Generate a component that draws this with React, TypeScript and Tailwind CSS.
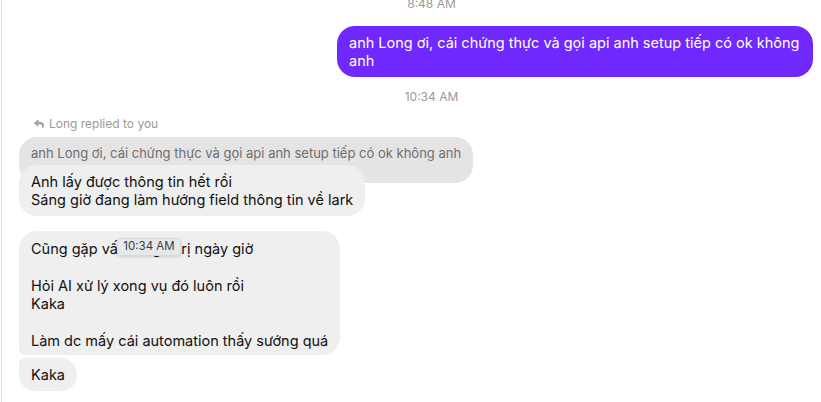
import { FaReply } from 'react-icons/fa';

const font = { fontFamily: 'Inter, "Noto Sans", sans-serif' };

function Stamp({ time, className }: { time: string; className: string }) {
  return (
    <div className={`flex justify-center pl-[31px] text-[12px] leading-[16px] text-[#9a9a9a] ${className}`}>
      {time}
    </div>
  );
}

export default function App() {
  return (
    <div style={font} className="h-[402px] w-[821px] overflow-hidden bg-white">
      <div className="ml-px flex h-full flex-col border-l border-[#dcdcdc] pl-[17px] pr-[8px]">
        {/* earlier timestamp, cut off at the top */}
        <Stamp time="8:48 AM" className="mt-[-4px]" />

        {/* outgoing */}
        <div className="mt-[14px] flex justify-end">
          <div className="w-[476px] rounded-[18px] bg-[#7028fd] px-[12px] pt-[7.5px] pb-[6.5px] text-[14.5px] leading-[18.5px] text-white">
            anh Long ơi, cái chứng thực và gọi api anh setup tiếp có ok không anh
          </div>
        </div>

        <Stamp time="10:34 AM" className="mt-[12px]" />

        {/* reply header */}
        <div className="mt-[11px] flex items-center gap-[5px] pl-[15px] text-[12px] leading-[16px] text-[#9a9a9a]">
          <FaReply size={10} className="text-[#a3a3a3]" />
          <span>Long replied to you</span>
        </div>

        {/* quoted message */}
        <div className="mt-[5px] flex flex-col items-start">
          <div className="rounded-[18px] bg-[#e4e4e4] px-[12px] pt-[8px] pb-[21px] text-[13px] leading-[17px] text-[#6e6e6e]">
            anh Long ơi, cái chứng thực và gọi api anh setup tiếp có ok không anh
          </div>
          <div className="mt-[-18px] rounded-[18px] bg-[#efefef] px-[12px] pt-[7.5px] pb-[6.5px] text-[14.5px] leading-[18.5px] text-[#111]">
            Anh lấy được thông tin hết rồi
            <br />
            Sáng giờ đang làm hướng field thông tin về lark
          </div>
        </div>

        {/* incoming group */}
        <div className="mt-[15px] flex flex-col items-start gap-[3px] text-[14.5px] leading-[18.5px] text-[#111]">
          <div className="relative rounded-[18px] rounded-bl-[6px] bg-[#efefef] px-[12px] pt-[8.5px] pb-[4.5px]">
            <p>Cũng gặp vấn đề giá trị ngày giờ</p>
            <p>&nbsp;</p>
            <p>Hỏi AI xử lý xong vụ đó luôn rồi</p>
            <p>Kaka</p>
            <p>&nbsp;</p>
            <p>Làm dc mấy cái automation thấy sướng quá</p>
            <div className="absolute left-[98px] top-[7px] flex h-[18px] w-[64px] items-center justify-center rounded-[3px] border border-[#d4d7db] bg-[#e6e8eb] text-[11.5px] leading-none text-[#3c3c3c] shadow-sm">
              10:34 AM
            </div>
          </div>
          <div className="rounded-[18px] rounded-tl-[6px] bg-[#efefef] px-[12px] pt-[8px] pb-[6px]">Kaka</div>
        </div>
      </div>
    </div>
  );
}
